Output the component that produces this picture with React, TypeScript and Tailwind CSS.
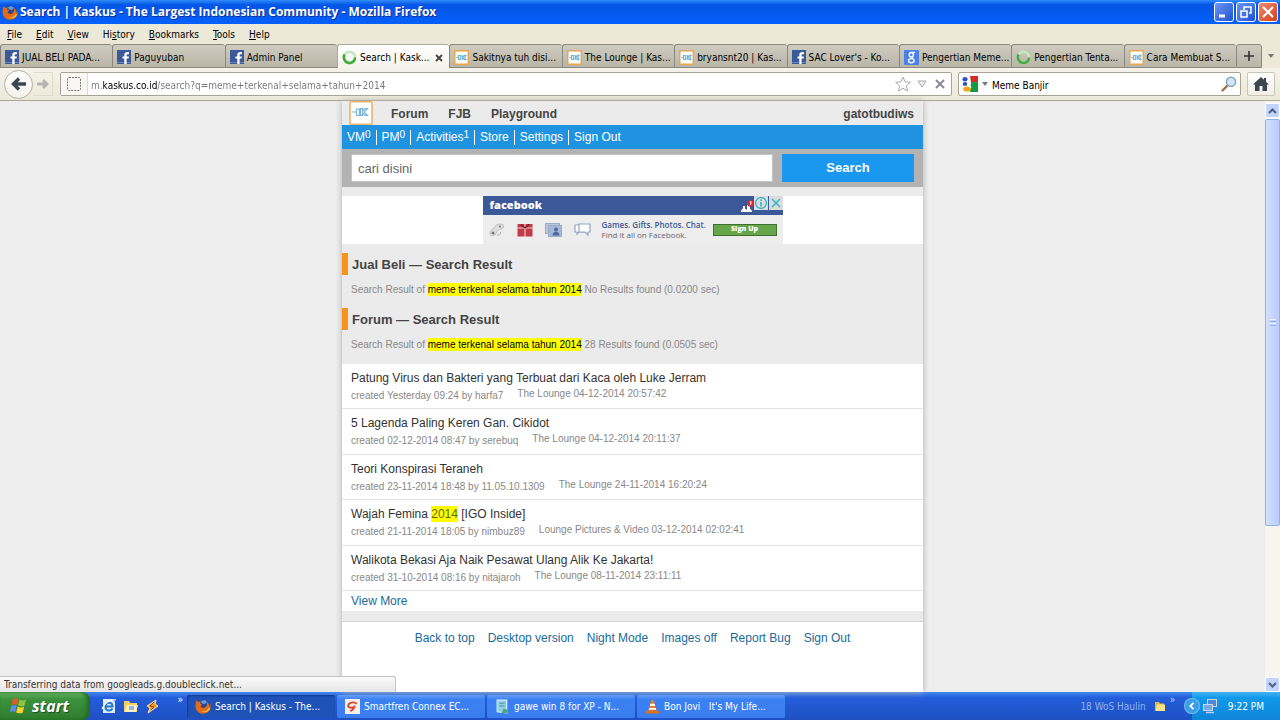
import type { ReactNode } from "react";

type IconName = "facebook" | "kaskus" | "google" | "spinner";

const menus = ["File", "Edit", "View", "History", "Bookmarks", "Tools", "Help"];
// position of the underlined access key in each menu label
const accessKeys = [0, 0, 0, 2, 0, 0, 0];

const tabs: { icon: IconName; label: string; active?: boolean }[] = [
  { icon: "facebook", label: "JUAL BELI PADA..." },
  { icon: "facebook", label: "Paguyuban" },
  { icon: "facebook", label: "Admin Panel" },
  { icon: "spinner", label: "Search | Kask...", active: true },
  { icon: "kaskus", label: "Sakitnya tuh disi..." },
  { icon: "kaskus", label: "The Lounge | Kas..." },
  { icon: "kaskus", label: "bryansnt20 | Kas..." },
  { icon: "facebook", label: "SAC Lover's - Ko..." },
  { icon: "google", label: "Pengertian Meme..." },
  { icon: "spinner", label: "Pengertian Tenta..." },
  { icon: "kaskus", label: "Cara Membuat S..." },
];

const userLinks: { label: string; count?: string }[] = [
  { label: "VM", count: "0" },
  { label: "PM", count: "0" },
  { label: "Activities", count: "1" },
  { label: "Store" },
  { label: "Settings" },
  { label: "Sign Out" },
];

const threads: { title: ReactNode; created: string; last: string }[] = [
  {
    title: "Patung Virus dan Bakteri yang Terbuat dari Kaca oleh Luke Jerram",
    created: "created Yesterday 09:24 by harfa7",
    last: "The Lounge 04-12-2014 20:57:42",
  },
  {
    title: "5 Lagenda Paling Keren Gan. Cikidot",
    created: "created 02-12-2014 08:47 by serebuq",
    last: "The Lounge 04-12-2014 20:11:37",
  },
  {
    title: "Teori Konspirasi Teraneh",
    created: "created 23-11-2014 18:48 by 11.05.10.1309",
    last: "The Lounge 24-11-2014 16:20:24",
  },
  {
    title: (
      <>
        Wajah Femina <mark className="bg-[#ffff00] py-px text-[#5c6b10]">2014</mark> [IGO Inside]
      </>
    ),
    created: "created 21-11-2014 18:05 by nimbuz89",
    last: "Lounge Pictures & Video 03-12-2014 02:02:41",
  },
  {
    title: "Walikota Bekasi Aja Naik Pesawat Ulang Alik Ke Jakarta!",
    created: "created 31-10-2014 08:16 by nitajaroh",
    last: "The Lounge 08-11-2014 23:11:11",
  },
];

const footerLinks = ["Back to top", "Desktop version", "Night Mode", "Images off", "Report Bug", "Sign Out"];

function FirefoxIcon() {
  return (
    <svg viewBox="0 0 16 16" className="size-4 shrink-0" aria-hidden="true">
      <circle cx="8.4" cy="7.6" r="6.4" fill="#27479b" />
      <path d="M6 3.2c2-1.6 5-1.2 6 .8l-2 2-3-.6z" fill="#5f9be0" />
      <path d="M1.6 2.2 3.4 4c.8-.6 1.8-.6 2.6-.4L4.8 5.4c.8.2 1.6.4 2.4 1L5.6 8c.4 2 3 2.6 4.8 1.2 1.6-1.2 2-3.4 1.4-5.2 2 1.2 2.6 3 2.4 5 .8-1 .8-2.6.6-4C16 8 15.8 11 14 13.2c-3 3.2-8.4 3.4-11.4.2C.2 10.8-.2 5.8 1.6 2.2z" fill="#e66a14" />
      <path d="M13.8 9.4c-1 3.2-4.6 4.8-8 3.8 3.2 2.2 8 1 9.4-3z" fill="#f9c23c" />
    </svg>
  );
}

function TabIcon({ name }: { name: IconName }) {
  if (name === "facebook") {
    return (
      <svg viewBox="0 0 14 14" className="size-3.5 shrink-0" aria-hidden="true">
        <rect width="14" height="14" fill="#3c5a99" />
        <rect y="12" width="14" height="1" fill="#6d84b4" />
        <path d="M9.6 14V8.6h2l.3-2.2H9.6V5.2c0-.7.3-1 1.100-1h1.200v-2c-2.800-.4-4.600.2-4.600 2.800v1.400H5.500v2.200h1.800V14z" fill="#fff" />
      </svg>
    );
  }
  if (name === "kaskus") {
    return (
      <svg viewBox="0 0 16 16" className="size-[15px] shrink-0" aria-hidden="true">
        <rect x=".8" y=".8" width="14.4" height="14.4" fill="#fff" stroke="#eda552" strokeWidth="1.6" />
        <path d="M2.5 8h2M4.8 6v4h2.4V6zM9 5.5v5M12.8 5.7H11L9.5 8l1.5 2.3h1.8L11.5 8z" fill="none" stroke="#6db3da" strokeWidth="1.2" />
      </svg>
    );
  }
  if (name === "google") {
    return (
      <svg viewBox="0 0 16 16" className="size-[15px] shrink-0" aria-hidden="true">
        <rect width="16" height="16" rx="1" fill="#4a80e8" />
        <ellipse cx="7.8" cy="5" rx="2.2" ry="2.4" fill="none" stroke="#fff" strokeWidth="1.5" />
        <ellipse cx="7.8" cy="11.4" rx="3" ry="2.2" fill="none" stroke="#fff" strokeWidth="1.5" />
        <path d="M8 2.5h4M8.5 7.2l1 2" stroke="#fff" strokeWidth="1.3" />
      </svg>
    );
  }
  return (
    <svg viewBox="0 0 16 16" className="size-[15px] shrink-0" fill="none" strokeWidth="2.8" aria-hidden="true">
      <circle cx="8" cy="8" r="6" stroke="#c4e8bf" />
      <path d="M2.8 4.8A6 6 0 1 0 14 8" stroke="#40ad3e" />
    </svg>
  );
}

function WindowButton({ label, close, children }: { label: string; close?: boolean; children: ReactNode }) {
  return (
    <button
      type="button"
      aria-label={label}
      className={`flex size-5 items-center justify-center rounded-[3px] border border-white ${
        close
          ? "bg-linear-to-br from-[#ee8a6c] to-[#d23c12]"
          : "bg-linear-to-br from-[#6d96f2] to-[#1c4fd4]"
      }`}
    >
      <svg viewBox="0 0 16 16" className="size-4" fill="none" stroke="#fff" strokeWidth="2" aria-hidden="true">
        {children}
      </svg>
    </button>
  );
}

function TitleBar() {
  return (
    <div className="flex h-6 items-center gap-0.5 bg-linear-to-b from-[#2f8bfa] via-[#0555e6] via-20% to-[#0560fb] px-0.5">
      <FirefoxIcon />
      <h1 className="flex-1 truncate font-['Open_Sans','Noto_Sans',sans-serif] text-[12px] font-bold text-white [text-shadow:1px_1px_0_#0a2f9a]">
        Search | Kaskus - The Largest Indonesian Community - Mozilla Firefox
      </h1>
      <div className="flex gap-0.5">
        <WindowButton label="Minimize">
          <path d="M3 12h6" strokeWidth="3" />
        </WindowButton>
        <WindowButton label="Restore">
          <path d="M6 6V3h7v6h-2" strokeWidth="1.5" />
          <path d="M3 7h6v6H3z" strokeWidth="1.5" />
        </WindowButton>
        <WindowButton label="Close" close>
          <path d="m3 3 10 10M13 3 3 13" />
        </WindowButton>
      </div>
    </div>
  );
}

function MenuBar() {
  return (
    <nav className="flex h-5 items-center gap-3.5 bg-[#ece9d8] px-[7px] text-[10px] text-black">
      {menus.map((menu, i) => (
        <button key={menu} type="button">
          {menu.slice(0, accessKeys[i])}
          <span className="underline">{menu[accessKeys[i]]}</span>
          {menu.slice(accessKeys[i] + 1)}
        </button>
      ))}
    </nav>
  );
}

function TabStrip() {
  return (
    <div className="flex h-6 bg-[#ece9d8]">
      <div className="flex min-w-0 flex-1">
        {tabs.map((tab) => (
          <div
            key={tab.label}
            className={`flex min-w-0 flex-1 items-center gap-[3px] rounded-t-[3px] border-t border-l pt-0.5 pl-1 ${
              tab.active
                ? "border-[#aca899] bg-linear-to-b from-white to-[#f5f3ea]"
                : "border-[#8b897f] border-b border-b-[#8b897f] bg-linear-to-b from-[#cfccc0] to-[#b9b6a8]"
            }`}
          >
            <TabIcon name={tab.icon} />
            <button type="button" className="min-w-0 flex-1 text-left text-[10px] whitespace-nowrap text-black">
              {tab.label}
            </button>
            {tab.active && (
              <button type="button" aria-label="Close tab" className="pr-1.5">
                <svg viewBox="0 0 8 8" className="size-2" stroke="#444" strokeWidth="1.8" aria-hidden="true">
                  <path d="m1 1 6 6M7 1 1 7" />
                </svg>
              </button>
            )}
          </div>
        ))}
      </div>
      <button
        type="button"
        aria-label="Open a new tab"
        className="flex w-[26px] items-center justify-center rounded-t-[3px] border border-[#8b897f] bg-linear-to-b from-[#cfccc0] to-[#b9b6a8]"
      >
        <svg viewBox="0 0 10 10" className="size-2.5" stroke="#333" strokeWidth="1.6" aria-hidden="true">
          <path d="M5 0v10M0 5h10" />
        </svg>
      </button>
      <button type="button" aria-label="List all tabs" className="flex w-[18px] items-center justify-center">
        <svg viewBox="0 0 6 4" className="h-1 w-1.5" fill="#777" aria-hidden="true">
          <path d="M0 0h6L3 4z" />
        </svg>
      </button>
    </div>
  );
}

function NavBar() {
  return (
    <div className="flex h-[33px] items-center border-b border-[#aca899] bg-linear-to-b from-[#f5f3ea] to-[#ece9d8] pr-[5px] pl-1 text-[10px]">
      <button
        type="button"
        aria-label="Back"
        className="flex size-[29px] items-center justify-center rounded-full border border-[#b3b0a3] bg-linear-to-b from-white to-[#f3f1ea]"
      >
        <svg viewBox="0 0 16 14" className="h-3.5 w-4" fill="none" stroke="#3b4650" strokeWidth="3.4" aria-hidden="true">
          <path d="M8 1.5 2.5 7 8 12.5M3 7h12" />
        </svg>
      </button>
      <button type="button" aria-label="Forward" className="flex h-6 w-5 items-center justify-center border-y border-r border-[#dedbcf]">
        <svg viewBox="0 0 12 10" className="h-2.5 w-3" fill="none" stroke="#b5b4ae" strokeWidth="2.8" aria-hidden="true">
          <path d="m6 1 4 4-4 4M0 5h9" />
        </svg>
      </button>
      <form className="ml-[7px] flex h-6 min-w-0 flex-1 items-center rounded-[2px] border border-[#a7a495] bg-white">
        <div className="flex h-full w-[27px] items-center justify-center border-r border-[#dddad0] bg-[#f8f7f3]">
          <svg viewBox="0 0 14 14" className="size-3.5" fill="none" stroke="#777" strokeDasharray="2 1" aria-hidden="true">
            <rect x=".5" y=".5" width="13" height="13" rx="1.5" />
          </svg>
        </div>
        {/* the host name is darker than the rest of the address */}
        <input
          aria-label="Address"
          defaultValue="m.kaskus.co.id/search?q=meme+terkenal+selama+tahun+2014"
          className="min-w-0 flex-1 bg-[linear-gradient(90deg,#777_0_14px,#000_14px_69px,#777_69px)] bg-clip-text px-[3px] pt-0.5 text-transparent caret-black outline-none"
        />
        <div className="flex items-center gap-1.5 px-1.5">
          <button type="button" aria-label="Bookmark this page">
            <svg viewBox="0 0 16 16" className="size-4" fill="#fff" stroke="#aaa" aria-hidden="true">
              <path d="m8 1 2.1 4.8 5.2.5-3.9 3.5 1.1 5.2L8 12.3 3.5 15l1.1-5.2L.7 6.3l5.2-.5z" />
            </svg>
          </button>
          <button type="button" aria-label="Show history">
            <svg viewBox="0 0 10 8" className="h-2 w-2.5" fill="#eee" stroke="#aaa" aria-hidden="true">
              <path d="M1 1h8L5 7z" />
            </svg>
          </button>
          <button type="button" aria-label="Stop" className="ml-0.5">
            <svg viewBox="0 0 10 10" className="size-2.5" stroke="#8c8996" strokeWidth="2" aria-hidden="true">
              <path d="m1 1 8 8M9 1 1 9" />
            </svg>
          </button>
        </div>
      </form>
      <form className="ml-1.5 flex h-6 w-[283px] items-center gap-1 rounded-[2px] border border-[#a7a495] bg-white px-[3px]">
        <svg viewBox="0 0 16 16" className="size-4 shrink-0" aria-hidden="true">
          <path d="M8 0h8v6H9z" fill="#d62d20" />
          <path d="M9 6h7v10H8z" fill="#159a46" />
          <ellipse cx="3" cy="3.2" rx="2.6" ry="2.2" fill="#2a56c6" />
          <ellipse cx="3" cy="8" rx="2.3" ry="2" fill="#2a56c6" />
          <ellipse cx="5" cy="13" rx="3.8" ry="2.6" fill="#f2a71b" />
          <path d="M6 1.5c2 1 2 3 0 4.5M5 9c2 0 3 1 4 3" fill="none" stroke="#fff" strokeWidth="1.2" />
        </svg>
        <svg viewBox="0 0 6 4" className="h-1 w-1.5 shrink-0" fill="#777" aria-hidden="true">
          <path d="M0 0h6L3 4z" />
        </svg>
        <input
          aria-label="Search with Google"
          defaultValue="Meme Banjir"
          className="min-w-0 flex-1 pt-0.5 text-black outline-none"
        />
        <button type="submit" aria-label="Search">
          <svg viewBox="0 0 16 16" className="size-4" aria-hidden="true">
            <path d="m1.5 14.5 5-5" stroke="#a1703f" strokeWidth="2.4" strokeLinecap="round" />
            <circle cx="10" cy="5.8" r="4.6" fill="#cfe6f8" stroke="#8ba4ba" strokeWidth="1.5" />
          </svg>
        </button>
      </form>
      <button
        type="button"
        aria-label="Home"
        className="ml-1.5 flex h-6 w-7 items-center justify-center rounded-[2px] border border-[#c9c6b9] bg-linear-to-b from-white to-[#f0eee5]"
      >
        <svg viewBox="0 0 16 14" className="h-3.5 w-4" fill="#3b4650" aria-hidden="true">
          <path d="M8 0 0 7.5h2V14h4.5V9h3v5H14V7.5h2L13 4.7V1h-2v1.8z" />
        </svg>
      </button>
    </div>
  );
}

function SiteHeader() {
  return (
    <header>
      <div className="flex h-6 items-center bg-[#ebebeb] pr-[9px] pl-[7px] text-[12px] font-bold text-[#444]">
        <a href="#" aria-label="Kaskus">
          <svg viewBox="0 0 24 24" className="size-6" aria-hidden="true">
            <rect x="1" y=".8" width="22" height="22.4" rx="1" fill="#fff" stroke="#eeb466" strokeWidth="1.6" />
            <path
              d="M3 11h4M7.5 8v6.500h3V8zM11.5 7.500v7h2V12l2.500 2.500h2.500L15 11l3.500-3.500H16L13.5 10V7.500z"
              fill="none"
              stroke="#77b5d9"
              strokeWidth="1.2"
            />
          </svg>
        </a>
        <nav className="ml-[18px] flex flex-1 gap-5 pt-0.5">
          <a href="#">Forum</a>
          <a href="#">FJB</a>
          <a href="#">Playground</a>
        </nav>
        <a href="#" className="pt-0.5">
          gatotbudiws
        </a>
      </div>
      <nav className="flex h-6 items-center bg-[#2093e0] px-[5px] text-[12px] text-white">
        {userLinks.map((link, i) => (
          <a
            key={link.label}
            href="#"
            className={`leading-[15px] ${i > 0 ? "ml-[5px] border-l border-white pl-[5px]" : ""}`}
          >
            {link.label}
            {link.count && <sup className="-top-[3px] text-[10px]">{link.count}</sup>}
          </a>
        ))}
      </nav>
      <form className="flex h-[38px] items-center gap-[9px] bg-[#b3b3b3] px-[9px]">
        <input
          aria-label="Search Kaskus"
          placeholder="cari disini"
          className="h-7 min-w-0 flex-1 border border-[#c4c4c4] bg-white px-1.5 text-[13px] outline-none placeholder:text-[#666]"
        />
        <button type="submit" className="h-7 w-[132px] bg-[#1a97ee] text-[13px] font-bold text-white">
          Search
        </button>
      </form>
    </header>
  );
}

function AdBanner() {
  return (
    <aside className="mt-[9px] flex justify-center bg-white">
      <div className="h-12 w-[300px] bg-[#ededed] font-['Open_Sans','Noto_Sans',sans-serif]">
        <div className="flex h-[19px] items-center bg-[#3b5998] pl-[7px]">
          <span className="flex-1 text-[11px] font-extrabold text-white">facebook</span>
          <svg viewBox="0 0 14 12" className="h-3 w-3.5" aria-hidden="true">
            <path d="M1 12c0-2 1-3 2-3.500V6h2v2.500L7 10V5h3v4c1.500.5 2 1.500 2 3z" fill="#fff" />
            <circle cx="10.5" cy="3.5" r="3.3" fill="#d12f35" />
            <path d="M9.8 1.8h1.400L10.5 5" fill="none" stroke="#fff" />
          </svg>
          <a href="#" aria-label="About this ad" className="self-start">
            <svg viewBox="0 0 14 14" className="size-3.5 bg-[#dcdcdc]" fill="none" stroke="#23b3c9" strokeWidth="1.2" aria-hidden="true">
              <circle cx="7" cy="7" r="5.4" />
              <path d="M7 6v4.500M7 3.500v1.400" strokeWidth="1.5" />
            </svg>
          </a>
          <button type="button" aria-label="Close ad" className="ml-px self-start">
            <svg viewBox="0 0 14 14" className="size-3.5 bg-[#dcdcdc]" stroke="#23b3c9" strokeWidth="1.4" aria-hidden="true">
              <path d="m3 3 8 8M11 3l-8 8" />
            </svg>
          </button>
        </div>
        <div className="flex h-[29px] items-center px-1.5">
          <div className="flex flex-1 items-center justify-between pr-2.5">
            <svg viewBox="0 0 16 16" className="size-4" aria-hidden="true">
              <path d="M1 11c0-3 3-3 4-5s3-4 6-4 4 1 3.500 3-2.500 2-4 2.500S8 9 7 11.500 1 15 1 11z" fill="#dedede" stroke="#b5b5b5" strokeWidth=".8" />
              <path d="M2.5 11h3M4 9.500v3" stroke="#555" />
              <circle cx="11" cy="4.5" r="1" fill="#777" />
              <path d="M8 13c2 0 4 0 3.500-3" fill="none" stroke="#aaa" />
            </svg>
            <svg viewBox="0 0 16 14" className="h-3.5 w-4" aria-hidden="true">
              <rect x=".5" y="1" width="15" height="12.5" fill="#c23a48" />
              <path d="M8 1v13M0 5h16" stroke="#f1c9cc" strokeWidth="1.2" />
              <path d="M8 5 4 1.500M8 5l4-3.500" stroke="#6e1d28" strokeWidth="1.5" />
            </svg>
            <svg viewBox="0 0 17 14" className="h-3.5 w-[17px]" aria-hidden="true">
              <rect x=".5" y=".5" width="14" height="10" fill="#b9c7df" stroke="#9bacca" />
              <rect x="3.5" y="2.5" width="13" height="11" fill="#a5b8d7" stroke="#9bacca" />
              <circle cx="11" cy="6.5" r="2" fill="#4e6aa0" />
              <path d="M7.5 12.500c0-5 7-5 7 0z" fill="#4e6aa0" />
            </svg>
            <svg viewBox="0 0 17 14" className="h-3.5 w-[17px]" fill="#fff" stroke="#93a5c4" strokeWidth="1.2" aria-hidden="true">
              <path d="M1 2h9v7H5l-2 2V9H1z" />
              <path d="M5 1h11v8h-2v3l-3-3H5z" />
            </svg>
          </div>
          <p className="w-[111px] text-[8px] leading-[10px] whitespace-nowrap text-[#666]">
            <b className="font-semibold text-[#3b5998]">Games. Gifts. Photos. Chat.</b>
            <br />
            Find it all on Facebook.
          </p>
          <button type="button" className="flex h-3 w-16 items-center justify-center border border-[#3f7030] bg-[#67a54b] text-[7px] font-extrabold text-white">
            Sign Up
          </button>
        </div>
      </div>
    </aside>
  );
}

function ResultHeading({ title, summary }: { title: string; summary: string }) {
  return (
    <div>
      <h2 className="h-[22px] border-l-[6px] border-[#f7941e] pl-1 text-[13px] leading-6 font-bold text-[#444]">
        {title} — Search Result
      </h2>
      <p className="h-[33px] pl-[9px] text-[10px] leading-[30px] text-[#888]">
        Search Result of <mark className="bg-[#ffff00] py-px text-black">meme terkenal selama tahun 2014</mark> {summary}
      </p>
    </div>
  );
}

function Page() {
  return (
    <div className="mx-auto flex w-full max-w-[581px] flex-col bg-[#ebebeb] font-['Liberation_Sans',Arial,sans-serif] shadow-[0_0_6px_#aaa]">
      <SiteHeader />
      <AdBanner />
      <main>
        <div className="pt-[9px] pb-px">
          <ResultHeading title="Jual Beli" summary="No Results found (0.0200 sec)" />
          <ResultHeading title="Forum" summary="28 Results found (0.0505 sec)" />
        </div>
        <ul className="grid min-h-[227px] auto-rows-fr bg-white">
          {threads.map((thread) => (
            <li key={thread.created} className="border-b border-[#e2e2e2] px-[9px] pt-1.5">
              <a href="#" className="block text-[12px] leading-4 text-[#333]">
                {thread.title}
              </a>
              <div className="flex gap-3.5 text-[10px] leading-4 text-[#888]">
                <span className="pt-0.5">{thread.created}</span>
                <span>{thread.last}</span>
              </div>
            </li>
          ))}
        </ul>
        <a href="#" className="block bg-white px-[9px] text-[12px] leading-5 text-[#1b6a9c]">
          View More
        </a>
      </main>
      <footer className="mt-2.5 flex flex-1 items-start justify-center gap-[13px] border-t border-[#d4d4d4] bg-white pt-2 text-[12px] leading-4 text-[#1b6a9c]">
        {footerLinks.map((link) => (
          <a key={link} href="#">
            {link}
          </a>
        ))}
      </footer>
    </div>
  );
}

function ScrollButton({ label, d }: { label: string; d: string }) {
  return (
    <button
      type="button"
      aria-label={label}
      className="flex size-[15px] items-center justify-center rounded-[2px] border border-white bg-[#c2d3fc]"
    >
      <svg viewBox="0 0 9 6" className="h-1.5 w-[9px]" fill="none" stroke="#4d6185" strokeWidth="2" aria-hidden="true">
        <path d={d} />
      </svg>
    </button>
  );
}

function ScrollBar() {
  return (
    <div className="flex w-[15px] flex-col bg-[#f6f5f0] pt-0.5">
      <ScrollButton label="Scroll up" d="m1 5 3.5-3.5L8 5" />
      <div className="flex-1 py-px">
        <div className="flex h-[73%] flex-col items-center justify-center gap-px rounded-[2px] border border-[#98b1e4] bg-linear-to-r from-[#d3e0fe] to-[#b9cbf9]">
          <i className="h-px w-1.5 bg-[#eef4fe]" />
          <i className="h-px w-1.5 bg-[#8cb0f8]" />
          <i className="h-px w-1.5 bg-[#eef4fe]" />
          <i className="h-px w-1.5 bg-[#8cb0f8]" />
        </div>
      </div>
      <ScrollButton label="Scroll down" d="m1 1 3.5 3.5L8 1" />
    </div>
  );
}

function TaskButton({ label, active, children }: { label: string; active?: boolean; children: ReactNode }) {
  return (
    <button
      type="button"
      className={`flex h-[23px] w-[148px] items-center gap-1 rounded-[2px] px-2 whitespace-pre ${
        active
          ? "bg-[#1e52b7] shadow-[inset_1px_1px_2px_#123a8c]"
          : "bg-linear-to-b from-[#5a9bfb] via-[#3c81f3] via-20% to-[#3a7df0]"
      }`}
    >
      {children}
      {label}
    </button>
  );
}

function TaskBar() {
  return (
    <footer className="flex h-7 items-center bg-linear-to-b from-[#4288f0] via-[#245edb] via-20% to-[#1f4fc4] text-[10px] text-white">
      <button
        type="button"
        className="flex h-full w-[90px] items-center gap-1 rounded-r-lg bg-linear-to-b from-[#6cb86a] via-[#3c933c] via-25% to-[#2f7d2f] pl-2.5 font-['Open_Sans','Noto_Sans',sans-serif] text-[16px] font-bold italic shadow-[inset_-3px_0_4px_#1f6a1f] [text-shadow:1px_1px_1px_#1c4c1c]"
      >
        <svg viewBox="0 0 18 18" className="size-[18px]" aria-hidden="true">
          <path d="M3 2c2-1.3 4-1 5.500 0L7 8C5.500 7 3.500 7 1.500 8z" fill="#e8592b" />
          <path d="M9.5 2.500c2 1.200 4 1.200 6.500 0l-1.500 6c-2 1.200-4.500 1-6.500 0z" fill="#8cc63e" />
          <path d="M1.2 9c2-1.200 4-1 5.500 0l-1.500 6c-1.500-1-3.500-1-5.200 0z" fill="#5b8def" />
          <path d="M7.7 9.500c2 1.200 4.200 1.200 6.500 0l-1.500 6c-2 1.200-4.500 1-6.500 0z" fill="#fcd12a" />
        </svg>
        start
      </button>
      <div className="flex items-center gap-1.5 pl-[11px]">
        <button type="button" aria-label="Internet Explorer">
          <svg viewBox="0 0 16 16" className="size-4" aria-hidden="true">
            <path d="M2 1h9l3 3v11H2z" fill="#dcebfa" />
            <path d="M4.5 8.500h7c0-5-7-5-7 0s5 5 7 2" fill="none" stroke="#2479c9" strokeWidth="2" />
            <path d="M1 11C3 5 9 1 15 2" fill="none" stroke="#fff" strokeWidth="1.2" />
          </svg>
        </button>
        <button type="button" aria-label="Explorer">
          <svg viewBox="0 0 16 16" className="size-4" aria-hidden="true">
            <path d="M1 3h5l1.5 2H14v9H1z" fill="#f4cf62" />
            <path d="M4 7h11l-2 7H2z" fill="#fdf1bb" />
            <rect x="6" y="8" width="5" height="4" fill="#93b6e8" />
          </svg>
        </button>
        <button type="button" aria-label="Winamp">
          <svg viewBox="0 0 16 16" className="size-4" aria-hidden="true">
            <path d="M11 2 2 8l3 2-2 5 10-7-3-2z" fill="#f39a1e" stroke="#f8e3b8" />
            <path d="m9 4-4 4 4 1-3 3" fill="none" stroke="#8b4d07" />
          </svg>
        </button>
      </div>
      <span className="w-[26px] self-start pr-1 text-right leading-4">»</span>
      <div className="flex flex-1 gap-0.5">
        <TaskButton label="Search | Kaskus - The..." active>
          <FirefoxIcon />
        </TaskButton>
        <TaskButton label="Smartfren Connex EC...">
          <svg viewBox="0 0 14 14" className="size-[15px] shrink-0" aria-hidden="true">
            <rect width="14" height="14" fill="#f5efec" />
            <path d="M11 4.500C8 2 3 3.500 3 6.500c0 2 3 2 6 .5M9 6c0 3-2 4-4 5.500" fill="none" stroke="#d8432e" strokeWidth="1.7" />
          </svg>
        </TaskButton>
        <TaskButton label="gawe win 8 for XP - N...">
          <svg viewBox="0 0 14 14" className="size-[15px] shrink-0" aria-hidden="true">
            <path d="M2 1h9v12l-9-1z" fill="#8fd0e2" stroke="#e2f3f8" />
            <path d="M4 4h5M4 6.500h5" stroke="#4c95ac" />
            <path d="m8 9 4 1-1 3H6z" fill="#4aa877" />
          </svg>
        </TaskButton>
        <TaskButton label="Bon Jovi   It's My Life...">
          <svg viewBox="0 0 14 14" className="size-[15px] shrink-0" aria-hidden="true">
            <path d="M6 1h2l3 10H3z" fill="#ef7d1a" />
            <path d="m5 4.500-.5 2h5l-.5-2zM4 8.500l-.5 1.500h7L10 8.500z" fill="#fff" />
            <path d="M1.5 11h11l1 2.500H.5z" fill="#e0701a" />
          </svg>
        </TaskButton>
      </div>
      <span className="text-[#8fb5f2]">18 WoS Haulin</span>
      <svg viewBox="0 0 12 12" className="ml-2 size-3" aria-hidden="true">
        <path d="M1 2h4l1 1.500h4V11H1z" fill="#e9b93c" />
        <path d="M3 4.500h8V11H2z" fill="#fbe38a" />
      </svg>
      <span className="w-[26px] self-start pl-1 leading-4 text-[#b9d0f8]">»</span>
      <div className="flex h-full items-center bg-linear-to-b from-[#3fb4f5] via-[#119aea] via-20% to-[#0f84d9] pr-4">
        <button type="button" aria-label="Show hidden icons" className="-ml-2 flex size-4 items-center justify-center rounded-full bg-[#3a9fe8] shadow-[inset_0_0_2px_#cfe8fb]">
          <svg viewBox="0 0 8 8" className="size-2" fill="none" stroke="#fff" strokeWidth="1.8" aria-hidden="true">
            <path d="M5.5.8 2.300 4l3.200 3.200" />
          </svg>
        </button>
        <svg viewBox="0 0 16 16" className="ml-0.5 size-4" aria-hidden="true">
          <rect x="5.5" y="1.5" width="9" height="7" fill="#4f86d8" stroke="#cfd9e6" />
          <rect x="1.5" y="6.5" width="9" height="6" fill="#79a8e8" stroke="#cfd9e6" />
          <path d="M4 14.500h8" stroke="#c6ced9" strokeWidth="1.5" />
        </svg>
        <time className="ml-2.5">9:22 PM</time>
      </div>
    </footer>
  );
}

export default function App() {
  return (
    <div className="flex min-h-screen flex-col font-['DejaVu_Sans_Condensed','Noto_Sans',sans-serif]">
      <TitleBar />
      <MenuBar />
      <TabStrip />
      <NavBar />
      <div className="relative flex flex-1 bg-[#ededed]">
        <Page />
        <ScrollBar />
        <p className="absolute bottom-0 left-0 h-4 w-[396px] rounded-tr-[3px] border-t border-r border-[#c2c2c2] bg-linear-to-b from-[#fafafa] to-[#e6e6e6] pl-1 text-[10px] leading-[15px] text-[#333]">
          Transferring data from googleads.g.doubleclick.net...
        </p>
      </div>
      <TaskBar />
    </div>
  );
}
